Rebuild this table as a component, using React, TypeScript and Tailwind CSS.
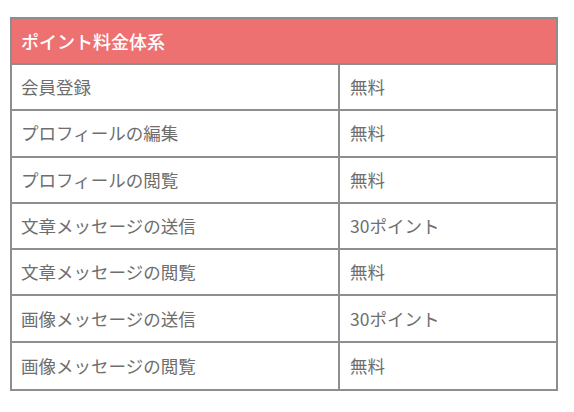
import React from 'react';

const rows = [
  { item: '会員登録', price: '無料' },
  { item: 'プロフィールの編集', price: '無料' },
  { item: 'プロフィールの閲覧', price: '無料' },
  { item: '文章メッセージの送信', price: '30ポイント' },
  { item: '文章メッセージの閲覧', price: '無料' },
  { item: '画像メッセージの送信', price: '30ポイント' },
  { item: '画像メッセージの閲覧', price: '無料' },
];

export default function App() {
  return (
    <div
      className="w-[574px] h-[412px] bg-white pt-[17px] pl-[10px]"
      style={{ fontFamily: '"Noto Sans CJK JP", "Noto Sans", sans-serif' }}
    >
      <div className="w-[548px] border-2 border-[#8e8e8e]">
        <div className="h-[46px] bg-[#ee7171] border-b-2 border-[#8e8e8e] flex items-center px-[9px] text-[18px] font-medium text-white">
          ポイント料金体系
        </div>
        {rows.map((row, i) => (
          <div
            key={row.item}
            className={`grid grid-cols-[326px_1fr] h-[46.3px] text-[17.5px] text-[#6e6e6e] ${
              i < rows.length - 1 ? 'border-b-2 border-[#8e8e8e]' : ''
            }`}
          >
            <div className="flex items-center px-[9px]">{row.item}</div>
            <div className="flex items-center px-[10px] border-l-2 border-[#8e8e8e]">{row.price}</div>
          </div>
        ))}
      </div>
    </div>
  );
}
